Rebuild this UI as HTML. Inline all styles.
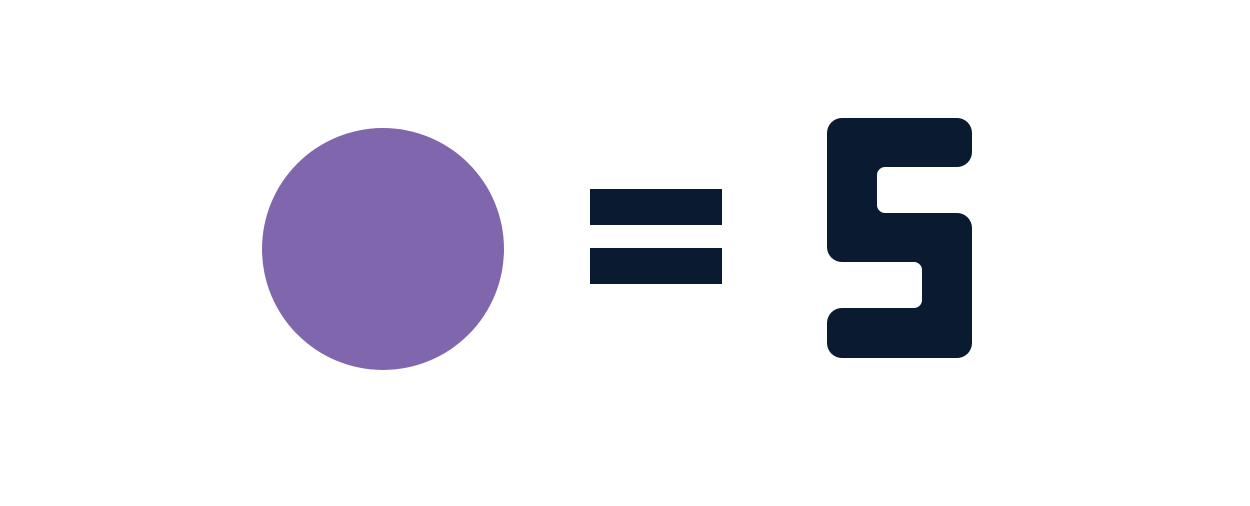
<!DOCTYPE html>
<html><head><meta charset="utf-8"><style>html,body{margin:0;padding:0;background:#fff;}svg{display:block}</style></head>
<body>
<svg width="1250" height="506" viewBox="0 0 1250 506" xmlns="http://www.w3.org/2000/svg">
<rect width="1250" height="506" fill="#fff"/>
<circle cx="383" cy="249" r="121" fill="#8067AD"/>
<rect x="590" y="189" width="132" height="36" fill="#0A1A31"/>
<rect x="590" y="248" width="132" height="36" fill="#0A1A31"/>
<path fill="#0A1A31" d="M842,118 H957 a15,15 0 0 1 15,15 V152 a15,15 0 0 1 -15,15 H885 a8,8 0 0 0 -8,8 V205 a8,8 0 0 0 8,8 H957 a15,15 0 0 1 15,15 V343 a15,15 0 0 1 -15,15 H842 a15,15 0 0 1 -15,-15 V323 a15,15 0 0 1 15,-15 H914 a8,8 0 0 0 8,-8 V270 a8,8 0 0 0 -8,-8 H842 a15,15 0 0 1 -15,-15 V133 a15,15 0 0 1 15,-15 Z"/>
</svg>
</body></html>
